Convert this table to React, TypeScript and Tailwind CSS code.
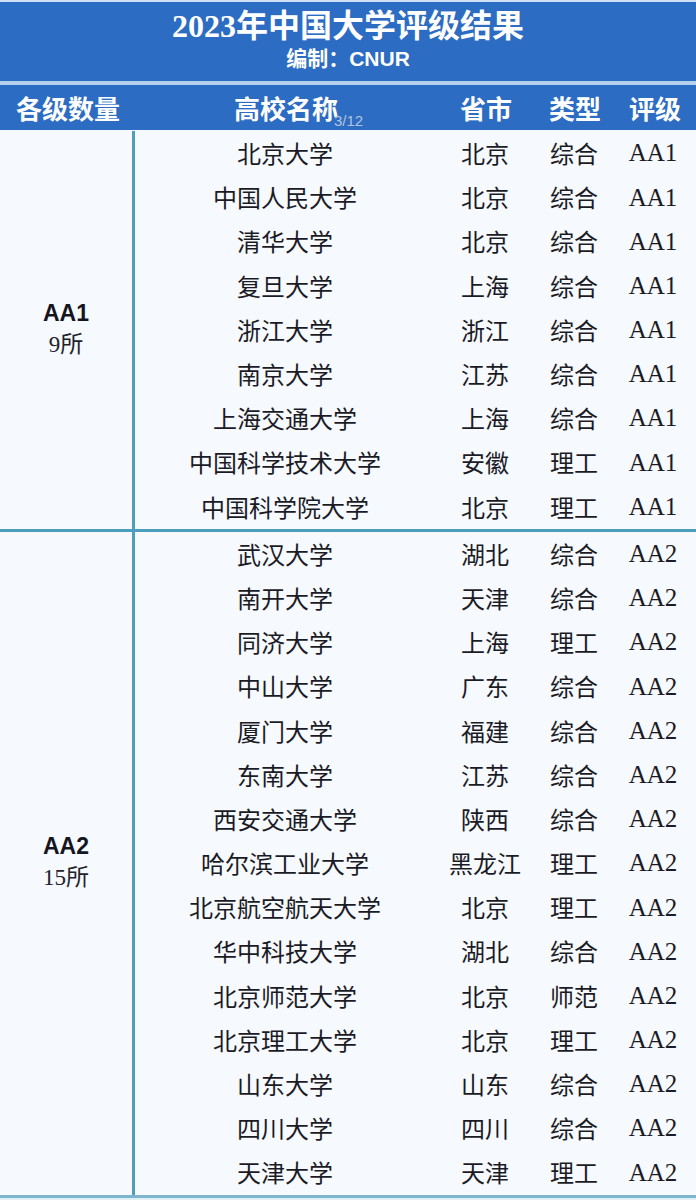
const AA1 = [
  ['北京大学', '北京', '综合'],
  ['中国人民大学', '北京', '综合'],
  ['清华大学', '北京', '综合'],
  ['复旦大学', '上海', '综合'],
  ['浙江大学', '浙江', '综合'],
  ['南京大学', '江苏', '综合'],
  ['上海交通大学', '上海', '综合'],
  ['中国科学技术大学', '安徽', '理工'],
  ['中国科学院大学', '北京', '理工'],
];

const AA2 = [
  ['武汉大学', '湖北', '综合'],
  ['南开大学', '天津', '综合'],
  ['同济大学', '上海', '理工'],
  ['中山大学', '广东', '综合'],
  ['厦门大学', '福建', '综合'],
  ['东南大学', '江苏', '综合'],
  ['西安交通大学', '陕西', '综合'],
  ['哈尔滨工业大学', '黑龙江', '理工'],
  ['北京航空航天大学', '北京', '理工'],
  ['华中科技大学', '湖北', '综合'],
  ['北京师范大学', '北京', '师范'],
  ['北京理工大学', '北京', '理工'],
  ['山东大学', '山东', '综合'],
  ['四川大学', '四川', '综合'],
  ['天津大学', '天津', '理工'],
];

const cjk = "font-['Noto_Sans_CJK_SC',sans-serif]";

function Section({ grade, count, rows }: { grade: string; count: string; rows: string[][] }) {
  return (
    <div className="flex">
      <div className="w-[135px] shrink-0 border-r-[3px] border-[#4d9dbd] flex flex-col items-center justify-center">
        <span className="font-['Liberation_Sans',sans-serif] font-bold text-[23px] leading-[30px] text-[#15151f]">{grade}</span>
        <span className="font-['Liberation_Serif','Noto_Sans_CJK_SC',serif] text-[23px] leading-[34px] text-[#22222c]">{count}</span>
      </div>
      <div className="flex-1">
        {rows.map(([name, prov, type]) => (
          <div key={name} className={`h-[44.2px] grid grid-cols-[300px_100px_78px_80px] items-center text-[24px] text-[#1b1b26] ${cjk}`}>
            <span className="text-center">{name}</span>
            <span className="text-center">{prov}</span>
            <span className="text-center">{type}</span>
            <span className="text-center font-['Liberation_Serif',serif] text-[25px]">{grade}</span>
          </div>
        ))}
      </div>
    </div>
  );
}

export default function App() {
  return (
    <div className="relative w-[696px] h-[1200px] overflow-hidden bg-[#f6f9fd]">
      <div className="h-[2px] bg-[#cfe0f4]" />
      <div className="h-[79px] bg-[#2d6cc3] flex flex-col items-center text-white">
        <h1 className="mt-[4px] text-[32px] leading-[40px] font-bold font-['Liberation_Serif','Noto_Sans_CJK_SC',serif]">
          2023年中国大学评级结果
        </h1>
        <p className="text-[21px] leading-[26px] font-bold font-['Liberation_Sans','Noto_Sans_CJK_SC',sans-serif]">
          编制：CNUR
        </p>
      </div>
      <div className="h-[4px] bg-[#b3d0ef]" />
      <div className={`h-[45px] bg-[#2d6cc3] flex items-center text-white font-bold text-[26px] leading-[32px] ${cjk}`}>
        <span className="w-[136px] text-center">各级数量</span>
        <span className="w-[300px] text-center">高校名称</span>
        <span className="w-[100px] text-center">省市</span>
        <span className="w-[78px] text-center">类型</span>
        <span className="w-[82px] text-center">评级</span>
      </div>
      <span className="absolute left-[334px] top-[112px] text-[15px] leading-[18px] text-[#d7dde6]/80 font-['Liberation_Sans',sans-serif]">3/12</span>
      <div className="h-[1px]" />
      <Section grade="AA1" count="9所" rows={AA1} />
      <div className="h-[3px] bg-[#4d9dbd]" />
      <Section grade="AA2" count="15所" rows={AA2} />
      <div className="h-[3px] bg-[#7fb6cf]" />
      <div className="h-[4px] bg-[#dff0f6]" />
    </div>
  );
}
